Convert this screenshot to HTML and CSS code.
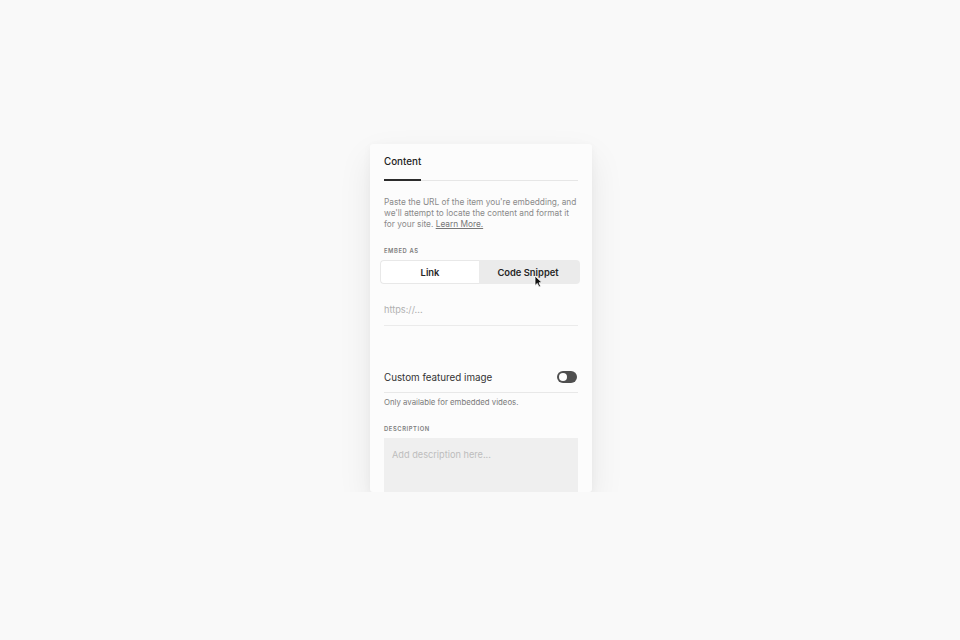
FILE: index.html
```html
<!DOCTYPE html>
<html>
<head>
<meta charset="utf-8">
<link rel="stylesheet" href="styles.css">
</head>
<body>
<div class="card">
  <div class="tabs"><div class="tab">Content</div></div>
  <p class="desc">Paste the URL of the item you're embedding, and we'll attempt to locate the content and format it for your site. <span class="learn">Learn More.</span></p>
  <div class="label label-embed">EMBED AS</div>
  <div class="seg">
    <div class="seg-item seg-link">Link</div>
    <div class="seg-item seg-code">Code Snippet</div>
  </div>
  <div class="url">https://...</div>
  <div class="row">
    <span class="row-text">Custom featured image</span>
    <span class="toggle"><span class="knob"></span></span>
  </div>
  <div class="note">Only available for embedded videos.</div>
  <div class="label label-desc">DESCRIPTION</div>
  <div class="textarea">Add description here...</div>
  <svg class="cursor" width="9" height="13" viewBox="0 0 9 13"><path d="M1 1 L1 10.5 L3.3 8.4 L5 12 L6.6 11.3 L5 7.8 L8 7.6 Z" fill="#111" stroke="#fff" stroke-width="0.8" stroke-linejoin="round"/></svg>
</div>
</body>
</html>
```
FILE: styles.css
```css
html, body {
  margin: 0;
  padding: 0;
  background: #f9f9f9;
  font-family: Inter, "Liberation Sans", sans-serif;
}
.card {
  position: relative;
  box-sizing: border-box;
  width: 222px;
  height: 348px;
  margin: 144px 0 0 370px;
  padding: 0 14px;
  background: #fcfcfc;
  border-radius: 3px;
  box-shadow: 0 14px 34px rgba(0,0,0,0.08), 0 2px 8px rgba(0,0,0,0.04);
  overflow: hidden;
}
.tabs {
  display: flex;
  border-bottom: 1px solid #e6e6e6;
}
.tab {
  font-size: 9.8px;
  font-weight: 500;
  color: #222;
  line-height: 12px;
  padding: 12px 0 11px;
  border-bottom: 2px solid #2b2b2b;
  margin-bottom: -1px;
}
.desc {
  margin: 16px 0 0;
  font-size: 8.3px;
  line-height: 11px;
  color: #8a8a8a;
}
.learn {
  color: #777;
  text-decoration: underline;
  text-underline-offset: 1px;
}
.label {
  font-size: 5.8px;
  font-weight: 600;
  letter-spacing: 0.6px;
  line-height: 8px;
  color: #7d7d7d;
}
.label-embed { margin-top: 17px; }
.seg {
  display: flex;
  height: 24px;
  margin: 5px -2px 0 -4px;
}
.seg-item {
  flex: 1;
  display: flex;
  align-items: center;
  justify-content: center;
  font-size: 9.4px;
  font-weight: 600;
  color: #262626;
  box-sizing: border-box;
}
.seg-link {
  background: #fff;
  border: 1px solid #e8e8e8;
  border-right: none;
  border-radius: 4px 0 0 4px;
}
.seg-code {
  background: #ebebeb;
  border-radius: 0 4px 4px 0;
  padding-right: 3px;
}
.url {
  margin-top: 16px;
  line-height: 20px;
  padding-bottom: 5px;
  border-bottom: 1px solid #ebebeb;
  font-size: 9.2px;
  color: #b0b0b0;
}
.row {
  display: flex;
  align-items: center;
  justify-content: space-between;
  height: 22px;
  margin-top: 40px;
  padding: 0 1px 4px 0;
  border-bottom: 1px solid #e8e8e8;
}
.row-text {
  font-size: 9.8px;
  color: #333;
}
.toggle {
  display: flex;
  align-items: center;
  width: 20px;
  height: 12px;
  border-radius: 6px;
  background: #4f4f4f;
  padding: 0 2px;
  box-sizing: border-box;
}
.knob {
  width: 8px;
  height: 8px;
  border-radius: 50%;
  background: #fff;
}
.note {
  margin-top: 4px;
  line-height: 10px;
  font-size: 7.8px;
  color: #7a7a7a;
}
.label-desc { margin-top: 18px; }
.textarea {
  margin-top: 5px;
  height: 60px;
  padding: 12px 8px;
  box-sizing: border-box;
  background: #efefef;
  line-height: 10px;
  font-size: 9.2px;
  color: #bdbdbd;
}
.cursor {
  position: absolute;
  left: 164px;
  top: 131px;
}
```
